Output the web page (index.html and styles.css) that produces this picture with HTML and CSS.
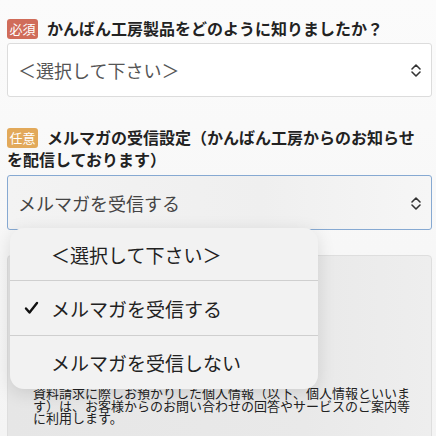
FILE: index.html
```html
<!DOCTYPE html>
<html lang="ja">
<head>
<meta charset="utf-8">
<link rel="stylesheet" href="styles.css">
</head>
<body>
<div class="form">
  <div class="field">
    <div class="label"><span class="badge req">必須</span>かんばん工房製品をどのように知りましたか？</div>
    <div class="select">
      <span>＜選択して下さい＞</span>
      <svg class="chev" width="12" height="15" viewBox="0 0 12 15"><path d="M2 6 L6 2 L10 6 M2 9 L6 13 L10 9" fill="none" stroke="#333" stroke-width="1.6" stroke-linecap="round" stroke-linejoin="round"/></svg>
    </div>
  </div>
  <div class="field field2">
    <div class="label wrap"><span class="badge opt">任意</span>メルマガの受信設定（かんばん工房からのお知らせを配信しております）</div>
    <div class="select active">
      <span>メルマガを受信する</span>
      <svg class="chev" width="12" height="15" viewBox="0 0 12 15"><path d="M2 6 L6 2 L10 6 M2 9 L6 13 L10 9" fill="none" stroke="#333" stroke-width="1.6" stroke-linecap="round" stroke-linejoin="round"/></svg>
    </div>
    <div class="menu">
      <div class="item"><span class="check"></span>＜選択して下さい＞</div>
      <div class="item"><span class="check"><svg width="15" height="14" viewBox="0 0 15 14"><path d="M2 7.5 L5.5 11.5 L13 2" fill="none" stroke="#111" stroke-width="2.4" stroke-linecap="round" stroke-linejoin="round"/></svg></span>メルマガを受信する</div>
      <div class="item"><span class="check"></span>メルマガを受信しない</div>
    </div>
  </div>
  <div class="box">
    <p>資料請求に際しお預かりした個人情報（以下、個人情報といいます）は、お客様からのお問い合わせの回答やサービスのご案内等に利用します。</p>
  </div>
</div>
</body>
</html>
```

FILE: styles.css
```css
html, body {
  margin: 0;
  padding: 0;
  height: 100%;
  overflow: hidden;
}
body {
  background: linear-gradient(180deg, #fbfbfb 0%, #f4f4f4 100%);
  font-family: "Noto Sans CJK JP", "Noto Sans", sans-serif;
  color: #222;
}
.form {
  padding: 17px 4px 0 7px;
  position: relative;
}
.field {
  position: relative;
}
.label {
  font-size: 16px;
  font-weight: 700;
  line-height: 22px;
  color: #222;
}
.label.wrap {
  padding-right: 16px;
}
.badge {
  display: inline-block;
  width: 31px;
  height: 20px;
  line-height: 20px;
  text-align: center;
  font-size: 13px;
  font-weight: 400;
  color: #fff;
  border-radius: 3px;
  margin-right: 9px;
  vertical-align: 1px;
}
.badge.req { background: #d06c5a; }
.badge.opt { background: #e2a95a; }
.select {
  margin-top: 4px;
  height: 52px;
  border: 1px solid #dcdcdc;
  border-radius: 3px;
  background: #fff;
  display: flex;
  align-items: center;
  justify-content: space-between;
  padding: 0 9px 0 10px;
  font-size: 18px;
  color: #555;
}
.select.active {
  height: 53px;
  border-color: #86a9d2;
  background: linear-gradient(90deg, #f3f3f3 0%, #efefef 60%, #f6f6f6 100%);
  color: #444;
  margin-top: 5px;
}
.field2 {
  margin-top: 29px;
}
.chev {
  display: block;
  margin-top: 1px;
}
.menu {
  position: absolute;
  left: 3px;
  top: 102px;
  width: 308px;
  background: #f2f2f2;
  border-radius: 14px;
  box-shadow: 0 4px 18px rgba(0,0,0,0.12);
  z-index: 5;
  overflow: hidden;
}
.item {
  height: 53px;
  display: flex;
  align-items: center;
  font-size: 19px;
  color: #222;
  border-top: 1px solid #cfcfcf;
}
.item:first-child {
  border-top: none;
  height: 52px;
}
.item:nth-child(2) {
  height: 54px;
}
.check {
  width: 41px;
  padding-left: 14px;
  box-sizing: border-box;
  display: flex;
  align-items: center;
}
.box {
  margin-top: 25px;
  height: 200px;
  background: linear-gradient(90deg, #e6e6e6 0%, #e9e9e9 70%, #eeeeee 100%);
  border: 1px solid #dedede;
  border-radius: 4px;
  padding: 131px 18px 0 25px;
  box-sizing: border-box;
}
.box p {
  margin: 0;
  font-size: 13px;
  line-height: 12.5px;
  color: #222;
}
```
